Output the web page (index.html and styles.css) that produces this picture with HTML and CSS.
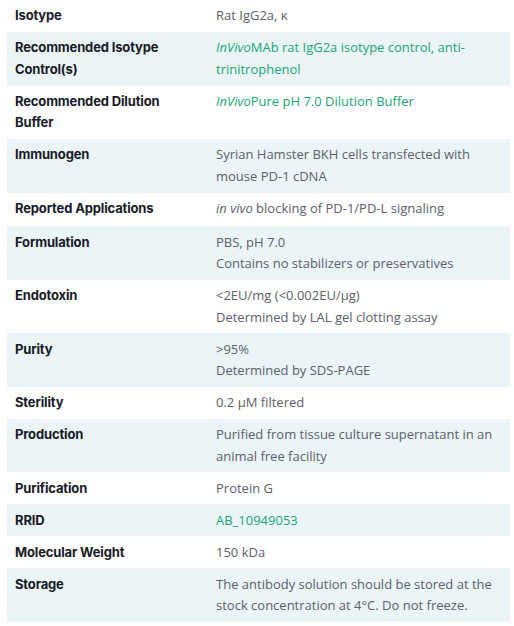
FILE: index.html
```html
<!DOCTYPE html>
<html lang="en">
<head>
<meta charset="utf-8">
<title>Specifications</title>
<link rel="stylesheet" href="styles.css">
</head>
<body>
<div class="specs">
  <div class="row"><div class="label">Isotype</div><div class="value">Rat IgG2a, κ</div></div>
  <div class="row alt"><div class="label">Recommended Isotype Control(s)</div><div class="value"><a class="link" href="#"><i>InVivo</i>MAb rat IgG2a isotype control, anti-trinitrophenol</a></div></div>
  <div class="row"><div class="label">Recommended Dilution Buffer</div><div class="value"><a class="link" href="#"><i>InVivo</i>Pure pH 7.0 Dilution Buffer</a></div></div>
  <div class="row alt"><div class="label">Immunogen</div><div class="value">Syrian Hamster BKH cells transfected with mouse PD-1 cDNA</div></div>
  <div class="row tall"><div class="label">Reported Applications</div><div class="value"><i>in vivo</i> blocking of PD-1/PD-L signaling</div></div>
  <div class="row alt"><div class="label">Formulation</div><div class="value">PBS, pH 7.0<br>Contains no stabilizers or preservatives</div></div>
  <div class="row"><div class="label">Endotoxin</div><div class="value">&lt;2EU/mg (&lt;0.002EU/μg)<br>Determined by LAL gel clotting assay</div></div>
  <div class="row alt"><div class="label">Purity</div><div class="value">&gt;95%<br>Determined by SDS-PAGE</div></div>
  <div class="row"><div class="label">Sterility</div><div class="value">0.2 μM filtered</div></div>
  <div class="row alt"><div class="label">Production</div><div class="value">Purified from tissue culture supernatant in an animal free facility</div></div>
  <div class="row"><div class="label">Purification</div><div class="value">Protein G</div></div>
  <div class="row alt"><div class="label">RRID</div><div class="value"><a class="link" href="#">AB_10949053</a></div></div>
  <div class="row"><div class="label">Molecular Weight</div><div class="value">150 kDa</div></div>
  <div class="row alt"><div class="label">Storage</div><div class="value">The antibody solution should be stored at the stock concentration at 4°C. Do not freeze.</div></div>
</div>
</body>
</html>
```

FILE: styles.css
```css
html, body {
  margin: 0;
  padding: 0;
  background: #ffffff;
}
body {
  padding: 0 4px 0 7px;
  font-family: "Open Sans", "Noto Sans", sans-serif;
  font-size: 13px;
  line-height: 21.5px;
  color: #5b606c;
}
.specs {
  display: flex;
  flex-direction: column;
}
.row {
  display: grid;
  grid-template-columns: 209px 1fr;
  padding: 5.25px 0;
}
.row.tall {
  padding-bottom: 7px;
}
.row.alt {
  background: #ebf4f7;
}
.label {
  padding: 0 40px 0 8px;
  font-family: Inter, "Liberation Sans", sans-serif;
  font-weight: 700;
  font-size: 13px;
  letter-spacing: -0.15px;
  color: #181a28;
}
.value {
  padding-right: 8px;
}
.link {
  color: #1ba575;
  text-decoration: none;
}
```
